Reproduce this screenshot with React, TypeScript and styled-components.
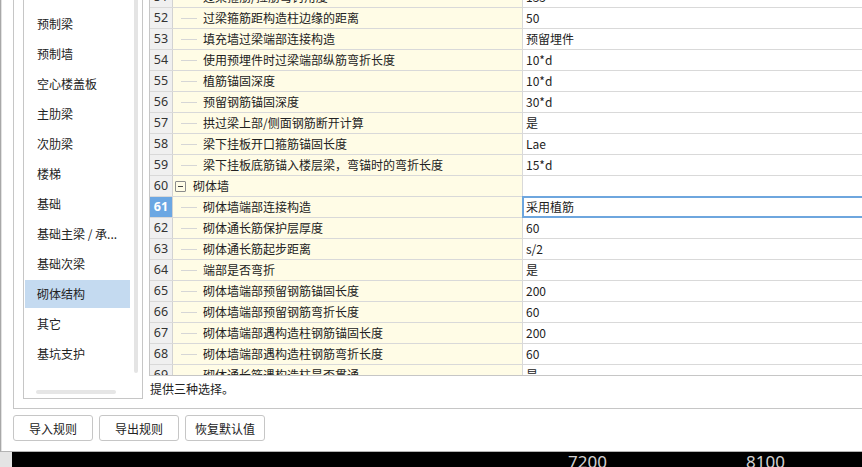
import React from "react";
import styled, { createGlobalStyle } from "styled-components";

const Global = createGlobalStyle`
  html, body { margin: 0; padding: 0; background: #fff; }
  body {
    font-family: "Noto Sans CJK SC", "Noto Sans", sans-serif;
    font-size: 12px;
    color: #222;
  }
  #root { width: 862px; height: 467px; overflow: hidden; }
`;

const Screen = styled.div`
  width: 862px;
  height: 467px;
  display: flex;
  flex-direction: column;
  overflow: hidden;
`;

const Dialog = styled.div`
  height: 452px;
  box-sizing: border-box;
  border-left: 1px solid #a8a8a8;
  border-bottom: 1px solid #b4b4b4;
  box-shadow: inset 1px 0 0 #e2e2e2;
  padding-left: 12px;
  background: #fff;
  display: flex;
  flex-direction: column;
`;

const Frame = styled.div`
  height: 409px;
  box-sizing: border-box;
  border-left: 1px solid #c6c6c6;
  border-bottom: 1px solid #c6c6c6;
  padding: 0 0 9px 9px;
  display: flex;
  gap: 6px;
`;

const Sidebar = styled.div`
  width: 120px;
  box-sizing: border-box;
  border: 1px solid #c6c6c6;
  border-top: none;
  display: grid;
  grid-template-columns: 107px 11px;
  grid-template-rows: 375px 1fr;
`;

const NavList = styled.div`
  padding-top: 10px;
  display: flex;
  flex-direction: column;
  gap: 2px;
  overflow: hidden;
`;

const NavItem = styled.div<{ $active?: boolean }>`
  margin-left: 1px;
  width: 105px;
  height: 28px;
  box-sizing: border-box;
  padding-left: 12px;
  line-height: 28px;
  white-space: nowrap;
  overflow: hidden;
  color: #222;
  background: ${(p) => (p.$active ? "#c4daf0" : "transparent")};
`;

const VTrack = styled.div`
  padding-left: 3px;
`;

const VThumb = styled.div`
  width: 4px;
  height: 373px;
  border-radius: 0 0 2px 2px;
  background: #e4e4e4;
`;

const HTrack = styled.div`
  grid-column: 1 / span 2;
  padding: 15px 0 0 12px;
`;

const HThumb = styled.div`
  width: 80px;
  height: 4px;
  border-radius: 2px;
  background: #e6e6e6;
`;

const Main = styled.div`
  flex: 1;
  min-width: 0;
  display: flex;
  flex-direction: column;
`;

const TableBox = styled.div`
  height: 376px;
  box-sizing: border-box;
  border-left: 1px solid #c6c6c6;
  border-bottom: 1px solid #c6c6c6;
  overflow: hidden;
`;

const Rows = styled.div`
  margin-top: -13px;
`;

const Row = styled.div`
  display: grid;
  grid-template-columns: 23px 350px 1fr;
  height: 21px;
  box-sizing: border-box;
  border-bottom: 1px solid #d9d9d9;
`;

const NumCell = styled.div<{ $sel?: boolean }>`
  box-sizing: border-box;
  border-right: 1px solid #d2d2d2;
  background: ${(p) => (p.$sel ? "#6ba7e3" : "#f0f0f0")};
  color: ${(p) => (p.$sel ? "#fff" : "#333")};
  font-weight: ${(p) => (p.$sel ? 700 : 400)};
  font-family: "Noto Sans", "Noto Sans CJK SC", sans-serif;
  font-size: 12.5px;
  line-height: 20px;
  text-align: center;
`;

const NameCell = styled.div`
  box-sizing: border-box;
  border-right: 1px solid #d9d9d9;
  background: #fffce6;
  display: flex;
  align-items: center;
  white-space: nowrap;
  overflow: hidden;
  line-height: 20px;
`;

const TreeLine = styled.span`
  flex: none;
  margin-left: 8px;
  margin-right: 6px;
  width: 16px;
  height: 1px;
  background: #d6d6d6;
`;

const Expander = styled.span`
  flex: none;
  margin-left: 2px;
  margin-right: 7px;
  width: 11px;
  height: 11px;
  box-sizing: border-box;
  border: 1px solid #8c8c8c;
  border-radius: 1px;
  display: flex;
  align-items: center;
  justify-content: center;
  &::before {
    content: "";
    width: 5px;
    height: 1px;
    background: #444;
  }
`;

const ValueCell = styled.div<{ $sel?: boolean }>`
  position: relative;
  padding-left: 3px;
  line-height: 20px;
  white-space: nowrap;
  background: #fff;
  &::after {
    content: "";
    display: ${(p) => (p.$sel ? "block" : "none")};
    position: absolute;
    top: -1px;
    left: -1px;
    right: -3px;
    bottom: -1px;
    border: 2px solid #6ea6de;
    pointer-events: none;
  }
`;

const Description = styled.div`
  padding: 4px 0 0 1px;
  line-height: 18px;
  color: #222;
`;

const ButtonBar = styled.div`
  margin-top: 6px;
  display: flex;
  gap: 6px;
`;

const Button = styled.button`
  width: 80px;
  height: 26px;
  box-sizing: border-box;
  border: 1px solid #c6c6c6;
  border-radius: 3px;
  background: #fff;
  font-family: "Noto Sans CJK SC", sans-serif;
  font-size: 12px;
  color: #222;
  padding: 0;
`;

const Footer = styled.div`
  height: 15px;
  display: flex;
`;

const FooterGap = styled.div`
  width: 12px;
  background: #e4e4e4;
`;

const Ruler = styled.div`
  flex: 1;
  background: #000;
  display: flex;
  padding-left: 556px;
  overflow: hidden;
`;

const RulerLabel = styled.span`
  width: 178px;
  flex: none;
  margin-top: 1px;
  font-family: "Noto Sans", "DejaVu Sans", sans-serif;
  font-size: 17px;
  line-height: 1;
  color: #d2d2d2;
`;

const navItems = [
  "预制梁",
  "预制墙",
  "空心楼盖板",
  "主肋梁",
  "次肋梁",
  "楼梯",
  "基础",
  "基础主梁 / 承...",
  "基础次梁",
  "砌体结构",
  "其它",
  "基坑支护",
];

type RowData = { n: number; name: string; value: string; group?: boolean };

const rows: RowData[] = [
  { n: 51, name: "过梁箍筋/拉筋弯钩角度", value: "135" },
  { n: 52, name: "过梁箍筋距构造柱边缘的距离", value: "50" },
  { n: 53, name: "填充墙过梁端部连接构造", value: "预留埋件" },
  { n: 54, name: "使用预埋件时过梁端部纵筋弯折长度", value: "10*d" },
  { n: 55, name: "植筋锚固深度", value: "10*d" },
  { n: 56, name: "预留钢筋锚固深度", value: "30*d" },
  { n: 57, name: "拱过梁上部/侧面钢筋断开计算", value: "是" },
  { n: 58, name: "梁下挂板开口箍筋锚固长度", value: "Lae" },
  { n: 59, name: "梁下挂板底筋锚入楼层梁，弯锚时的弯折长度", value: "15*d" },
  { n: 60, name: "砌体墙", value: "", group: true },
  { n: 61, name: "砌体墙端部连接构造", value: "采用植筋" },
  { n: 62, name: "砌体通长筋保护层厚度", value: "60" },
  { n: 63, name: "砌体通长筋起步距离", value: "s/2" },
  { n: 64, name: "端部是否弯折", value: "是" },
  { n: 65, name: "砌体墙端部预留钢筋锚固长度", value: "200" },
  { n: 66, name: "砌体墙端部预留钢筋弯折长度", value: "60" },
  { n: 67, name: "砌体墙端部遇构造柱钢筋锚固长度", value: "200" },
  { n: 68, name: "砌体墙端部遇构造柱钢筋弯折长度", value: "60" },
  { n: 69, name: "砌体通长筋遇构造柱是否贯通", value: "是" },
];

const SELECTED = 61;

export default function App() {
  return (
    <>
      <Global />
      <Screen>
        <Dialog>
          <Frame>
            <Sidebar>
              <NavList>
                {navItems.map((t) => (
                  <NavItem key={t} $active={t === "砌体结构"}>
                    {t}
                  </NavItem>
                ))}
              </NavList>
              <VTrack>
                <VThumb />
              </VTrack>
              <HTrack>
                <HThumb />
              </HTrack>
            </Sidebar>
            <Main>
              <TableBox>
                <Rows>
                  {rows.map((r) => (
                    <Row key={r.n}>
                      <NumCell $sel={r.n === SELECTED}>{r.n}</NumCell>
                      <NameCell>
                        {r.group ? <Expander /> : <TreeLine />}
                        {r.name}
                      </NameCell>
                      <ValueCell $sel={r.n === SELECTED}>{r.value}</ValueCell>
                    </Row>
                  ))}
                </Rows>
              </TableBox>
              <Description>提供三种选择。</Description>
            </Main>
          </Frame>
          <ButtonBar>
            <Button>导入规则</Button>
            <Button>导出规则</Button>
            <Button>恢复默认值</Button>
          </ButtonBar>
        </Dialog>
        <Footer>
          <FooterGap />
          <Ruler>
            <RulerLabel>7200</RulerLabel>
            <RulerLabel>8100</RulerLabel>
          </Ruler>
        </Footer>
      </Screen>
    </>
  );
}
